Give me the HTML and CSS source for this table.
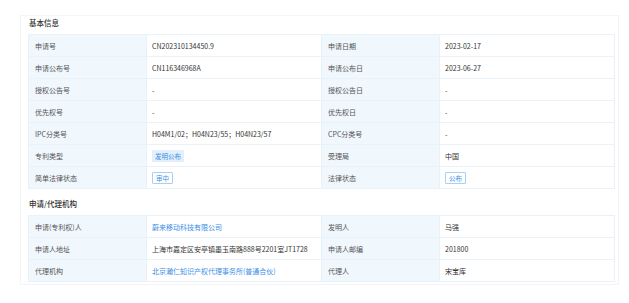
FILE: index.html
```html
<!DOCTYPE html>
<html lang="zh-CN">
<head>
  <meta charset="UTF-8" />
  <title>专利详情</title>
  <link rel="stylesheet" href="styles.css">
</head>
<body>
  <div class="card">
    <h3 class="section-title">基本信息</h3>
    <table class="info-table">
      <colgroup><col class="c-label"><col class="c-value"><col class="c-label"><col class="c-value"></colgroup>
      <tr><td class="label">申请号</td><td>CN202310134450.9</td><td class="label">申请日期</td><td>2023-02-17</td></tr>
      <tr><td class="label">申请公布号</td><td>CN116346968A</td><td class="label">申请公布日</td><td>2023-06-27</td></tr>
      <tr><td class="label">授权公告号</td><td>-</td><td class="label">授权公告日</td><td>-</td></tr>
      <tr><td class="label">优先权号</td><td>-</td><td class="label">优先权日</td><td>-</td></tr>
      <tr><td class="label">IPC分类号</td><td>H04M1/02；H04N23/55；H04N23/57</td><td class="label">CPC分类号</td><td>-</td></tr>
      <tr><td class="label">专利类型</td><td><span class="tag tag-fill">发明公布</span></td><td class="label">受理局</td><td>中国</td></tr>
      <tr><td class="label">简单法律状态</td><td><span class="tag tag-line">审中</span></td><td class="label">法律状态</td><td><span class="tag tag-line">公布</span></td></tr>
    </table>

    <h3 class="section-title second">申请/代理机构</h3>
    <table class="info-table">
      <colgroup><col class="c-label"><col class="c-value"><col class="c-label"><col class="c-value"></colgroup>
      <tr><td class="label">申请(专利权)人</td><td><a href="#">蔚来移动科技有限公司</a></td><td class="label">发明人</td><td>马强</td></tr>
      <tr><td class="label">申请人地址</td><td>上海市嘉定区安亭镇墨玉南路888号2201室JT1728</td><td class="label">申请人邮编</td><td>201800</td></tr>
      <tr><td class="label">代理机构</td><td><a href="#">北京瀚仁知识产权代理事务所(普通合伙)</a></td><td class="label">代理人</td><td>宋宝库</td></tr>
    </table>
  </div>
</body>
</html>
```

FILE: styles.css
```css
html, body {
  margin: 0;
  padding: 0;
  background: #fff;
  font-family: "Noto Sans CJK SC", "Noto Sans", sans-serif;
  color: #333;
}
.card {
  margin: 15px 0 0 20px;
  width: 599px;
  height: 270px;
  box-sizing: border-box;
  border: 1px solid #f2f4f7;
  padding: 0 6px 0 7px;
}
.section-title {
  margin: 0;
  height: 18px;
  padding-left: 1px;
  font-size: 7.5px;
  line-height: 14px;
  font-weight: 500;
  color: #333;
  padding-top: 0;
}
.section-title.second {
  height: 26px;
  line-height: 30px;
}
.info-table {
  width: 586px;
  border-collapse: collapse;
  table-layout: fixed;
}
.c-label {
  width: 118px;
}
.c-value {
  width: 175px;
}
.info-table td {
  height: 21px;
  padding: 0 0 0 5px;
  border: 1px solid #e9f1f9;
  font-size: 7px;
  color: #333;
  white-space: nowrap;
  overflow: hidden;
}
.info-table td.label {
  background: #f0f7fd;
  color: #555;
  padding-left: 6px;
}
.info-table a {
  color: #3a8ee6;
  text-decoration: none;
}
.tag {
  display: inline-block;
  font-size: 6.5px;
  line-height: 10px;
  padding: 0 3px;
  color: #3a8ee6;
  border-radius: 1px;
}
.tag-fill {
  background: #e3f0fc;
  line-height: 12px;
  padding: 0 3px;
}
.tag-line {
  border: 1px solid #a9cff5;
  background: #fff;
}
```
